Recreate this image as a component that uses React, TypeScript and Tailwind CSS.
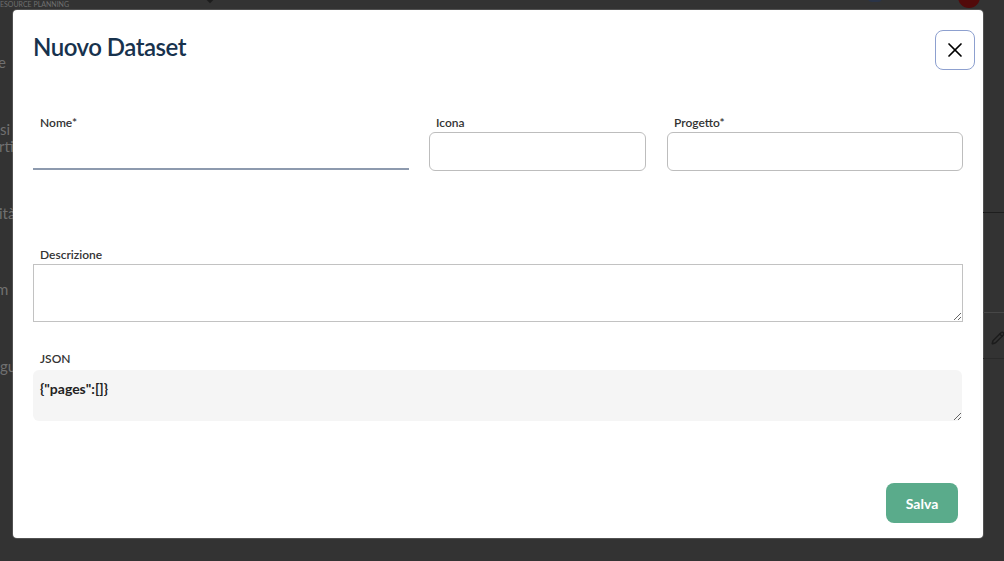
import { X, Pencil } from 'lucide-react'

function Field({ label, className, children }: { label: string; className?: string; children: React.ReactNode }) {
  return (
    <div className={className}>
      <label className="block h-[16px] pl-[7px] text-[12px] font-semibold leading-[16px] text-[#333333]">{label}</label>
      {children}
    </div>
  )
}

export default function App() {
  return (
    <div className="relative flex h-[561px] w-[1004px] overflow-hidden bg-[#333333] pt-[10px] font-['Lato','Noto_Sans',sans-serif]">
      {/* top bar of the page behind the overlay */}
      <div className="absolute inset-x-0 top-0 flex h-[10px] items-start">
        <div className="text-[7px] leading-[8px] text-[#6f6f6f]">ESOURCE PLANNING</div>
        <div className="ml-[138px] mt-[-4px] h-[6px] w-[6px] rotate-45 bg-[#1c1c1c]" />
        <div className="ml-auto mt-[-6px] h-[8px] w-[14px] rounded-b-sm bg-[#2a3448]" />
        <div className="ml-[76px] mr-[24px] mt-[-14px] h-[22px] w-[22px] rounded-full bg-[#520a0a]" />
      </div>

      {/* left edge of the page behind */}
      <div className="flex w-[13px] shrink-0 flex-col overflow-hidden whitespace-nowrap text-[15px] leading-[17px] text-[#707070]">
        <div className="ml-[-2px] mt-[44px]">e</div>
        <div className="mt-[50px]">si</div>
        <div className="ml-[-1px]">rtis</div>
        <div className="ml-[-1px] mt-[50px]">ità</div>
        <div className="ml-[-4px] mt-[59px]">m</div>
        <div className="mt-[60px]">gu</div>
      </div>

      {/* modal */}
      <div className="h-[528px] w-[970px] shrink-0 rounded-[4px] bg-white px-[20px] shadow-[0_0_0_1px_rgba(255,255,255,0.15)]">
        <div className="flex items-center justify-between pt-[20px]">
          <h1 className="mt-[-6px] text-[24px] font-semibold leading-[40px] tracking-[-0.5px] text-[#17324d]">Nuovo Dataset</h1>
          <button className="mr-[-12px] flex h-[40px] w-[40px] items-center justify-center rounded-[8px] border border-[#8da0cf] bg-white text-black">
            <X className="h-[24px] w-[24px]" strokeWidth={1.7} />
          </button>
        </div>

        <div className="mt-[45px] flex gap-[20px]">
          <Field label="Nome*" className="w-[376px]">
            <input className="mt-[1px] block h-[38px] w-full border-b-2 border-[#8d9aae] bg-transparent outline-none" />
          </Field>
          <Field label="Icona" className="w-[217px]">
            <input className="mt-[1px] block h-[39px] w-full rounded-[6px] border border-[#bdbdbd] bg-white outline-none" />
          </Field>
          <Field label="Progetto*" className="ml-[1px] w-[296px]">
            <input className="mt-[1px] block h-[39px] w-full rounded-[6px] border border-[#bdbdbd] bg-white outline-none" />
          </Field>
        </div>

        <Field label="Descrizione" className="mt-[76px]">
          <textarea className="mt-[1px] block h-[58px] w-[930px] border border-[#c2c2c2] bg-white outline-none" />
        </Field>

        <Field label="JSON" className="mt-[29px]">
          <textarea
            readOnly
            defaultValue={'{"pages":[]}'}
            className="mt-[3px] block h-[51px] w-[929px] rounded-[6px] bg-[#f5f5f5] px-[7px] pt-[9px] text-[14px] font-bold leading-[20px] text-[#222222] outline-none"
          />
        </Field>

        <div className="mt-[62px] flex justify-end">
          <button className="mr-[5px] h-[40px] w-[72px] rounded-[8px] bg-[#5aab8b] text-[14px] font-bold text-white">Salva</button>
        </div>
      </div>

      {/* right edge of the page behind */}
      <div className="flex flex-1 flex-col">
        <div className="mt-[202px] h-px bg-[#1e1e1e]" />
        <div className="mt-[99px] h-px bg-[#474747]" />
        <Pencil className="ml-[8px] mt-[18px] h-[14px] w-[14px] text-[#1c1c1c]" strokeWidth={2.5} />
        <div className="mt-[13px] h-px bg-[#2a2a2a]" />
      </div>
    </div>
  )
}
